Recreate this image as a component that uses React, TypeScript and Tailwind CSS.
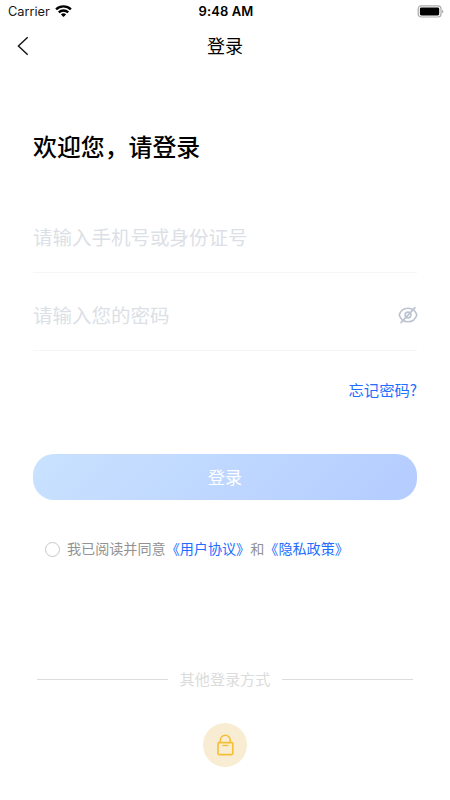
import React from "react";

function StatusBar() {
  return (
    <div className="grid h-[23px] grid-cols-3 items-center pr-[6px] pl-2 font-['Inter','Liberation_Sans',sans-serif]">
      <div className="flex items-center gap-[5px]">
        <span className="text-[12.8px] leading-[23px] tracking-[-0.02px] text-[#171717]">Carrier</span>
        <svg className="mb-px" width="17" height="12" viewBox="0 0 17 12" fill="none" stroke="#000" strokeWidth="2.4">
          <path d="M1.1 4.3a10.7 10.7 0 0 1 14.8 0" />
          <path d="M3.8 7.3a6.9 6.9 0 0 1 9.4 0" />
          <path d="M8.5 12 5.9 9.4a3.8 3.8 0 0 1 5.2 0Z" fill="#000" stroke="none" />
        </svg>
      </div>
      <span className="text-center text-[13px] leading-[23px] font-semibold tracking-[0.1px] text-black">9:48 AM</span>
      <svg className="justify-self-end" width="27" height="13" viewBox="0 0 27 13">
        <rect x="1.2" y="0.8" width="22.8" height="11.2" rx="3" fill="#fff" stroke="#aaa" strokeWidth="1.2" />
        <rect x="2.9" y="2.4" width="19.3" height="8" rx="1.4" fill="#000" />
        <path d="M25.2 4.8c1.5.5 1.5 3 0 3.5Z" fill="#999" />
      </svg>
    </div>
  );
}

function EyeOff() {
  return (
    <svg className="-mr-px" width="20" height="18" viewBox="0 0 20 18" fill="none" stroke="#bcc3d0" strokeWidth="1.6" strokeLinecap="round">
      <path d="M1.2 9C2.6 4.6 5.9 2.2 10 2.2S17.4 4.6 18.8 9C17.4 13.4 14.1 15.8 10 15.8S2.6 13.4 1.2 9Z" />
      <circle cx="10" cy="9" r="2.9" />
      <path d="M17 1.6 3 16.6" />
    </svg>
  );
}

function LockIcon() {
  return (
    <svg width="18" height="22" viewBox="0 0 18 22" fill="none" stroke="#f4bf37" strokeWidth="1.6">
      <path d="M4.3 8.5V6.3a5 5 0 0 1 10 0v2.2" />
      <rect x="2" y="8.6" width="14.8" height="12" rx="1" />
      <path d="M6.4 11.5h6" strokeWidth="1.4" />
    </svg>
  );
}

export default function App() {
  return (
    <main className="flex h-[800px] w-[450px] flex-col overflow-hidden bg-white font-['Noto_Sans_CJK_SC',sans-serif]">
      <StatusBar />
      <header className="grid h-[46px] grid-cols-3 items-center px-[17px]">
        <button aria-label="返回" className="w-fit">
          <svg width="12" height="20" viewBox="0 0 12 20" fill="none" stroke="#111" strokeWidth="1.4">
            <path d="M10.7 1.2 1.4 10l9.3 8.8" />
          </svg>
        </button>
        <h1 className="mb-[2px] text-center text-[18px] leading-[27px] font-normal text-black">登录</h1>
      </header>

      <div className="flex flex-col px-[33px] pt-[59px]">
        <h2 className="text-[23.9px] leading-9 font-medium text-black">欢迎您，请登录</h2>

        <div className="mt-8 flex h-[77px] items-center border-b border-[#f6f6f7] pt-[6px] text-[19.5px] font-normal text-[#dcdfe6]">
          <span>请输入手机号或身份证号</span>
        </div>
        <div className="flex h-[78px] items-center justify-between border-b border-[#f6f6f7] pt-[6px] text-[19.5px] font-normal text-[#dcdfe6]">
          <span>请输入您的密码</span>
          <EyeOff />
        </div>

        <a className="mt-[26px] self-end text-[15.3px] leading-6 text-[#216dff]">忘记密码?</a>

        <button className="mt-[53px] h-[46px] rounded-[21px] bg-linear-[135deg] from-[#c9e2ff] to-[#b4ccff] text-[17px] text-white">
          登录
        </button>

        <div className="mt-[37px] flex h-6 items-center pl-3 text-[14.1px] whitespace-nowrap text-[#939393]">
          <span className="mt-px mr-[7px] size-[15px] rounded-full border border-[#c8c8c8]" />
          <span>我已阅读并同意</span>
          <a className="text-[#216dff]">《用户协议》</a>
          <span>和</span>
          <a className="text-[#216dff]">《隐私政策》</a>
        </div>
      </div>

      <div className="mt-[106px] flex h-6 items-center gap-3 px-[37px] text-[15.1px] font-normal text-[#dbdbdb]">
        <span className="h-px flex-1 bg-[#dcdcdc]" />
        <span className="mb-[2px]">其他登录方式</span>
        <span className="h-px flex-1 bg-[#dcdcdc]" />
      </div>

      <button aria-label="密码登录" className="mt-8 flex size-[44px] items-center justify-center self-center rounded-full bg-[#f8edd2]">
        <LockIcon />
      </button>
    </main>
  );
}
